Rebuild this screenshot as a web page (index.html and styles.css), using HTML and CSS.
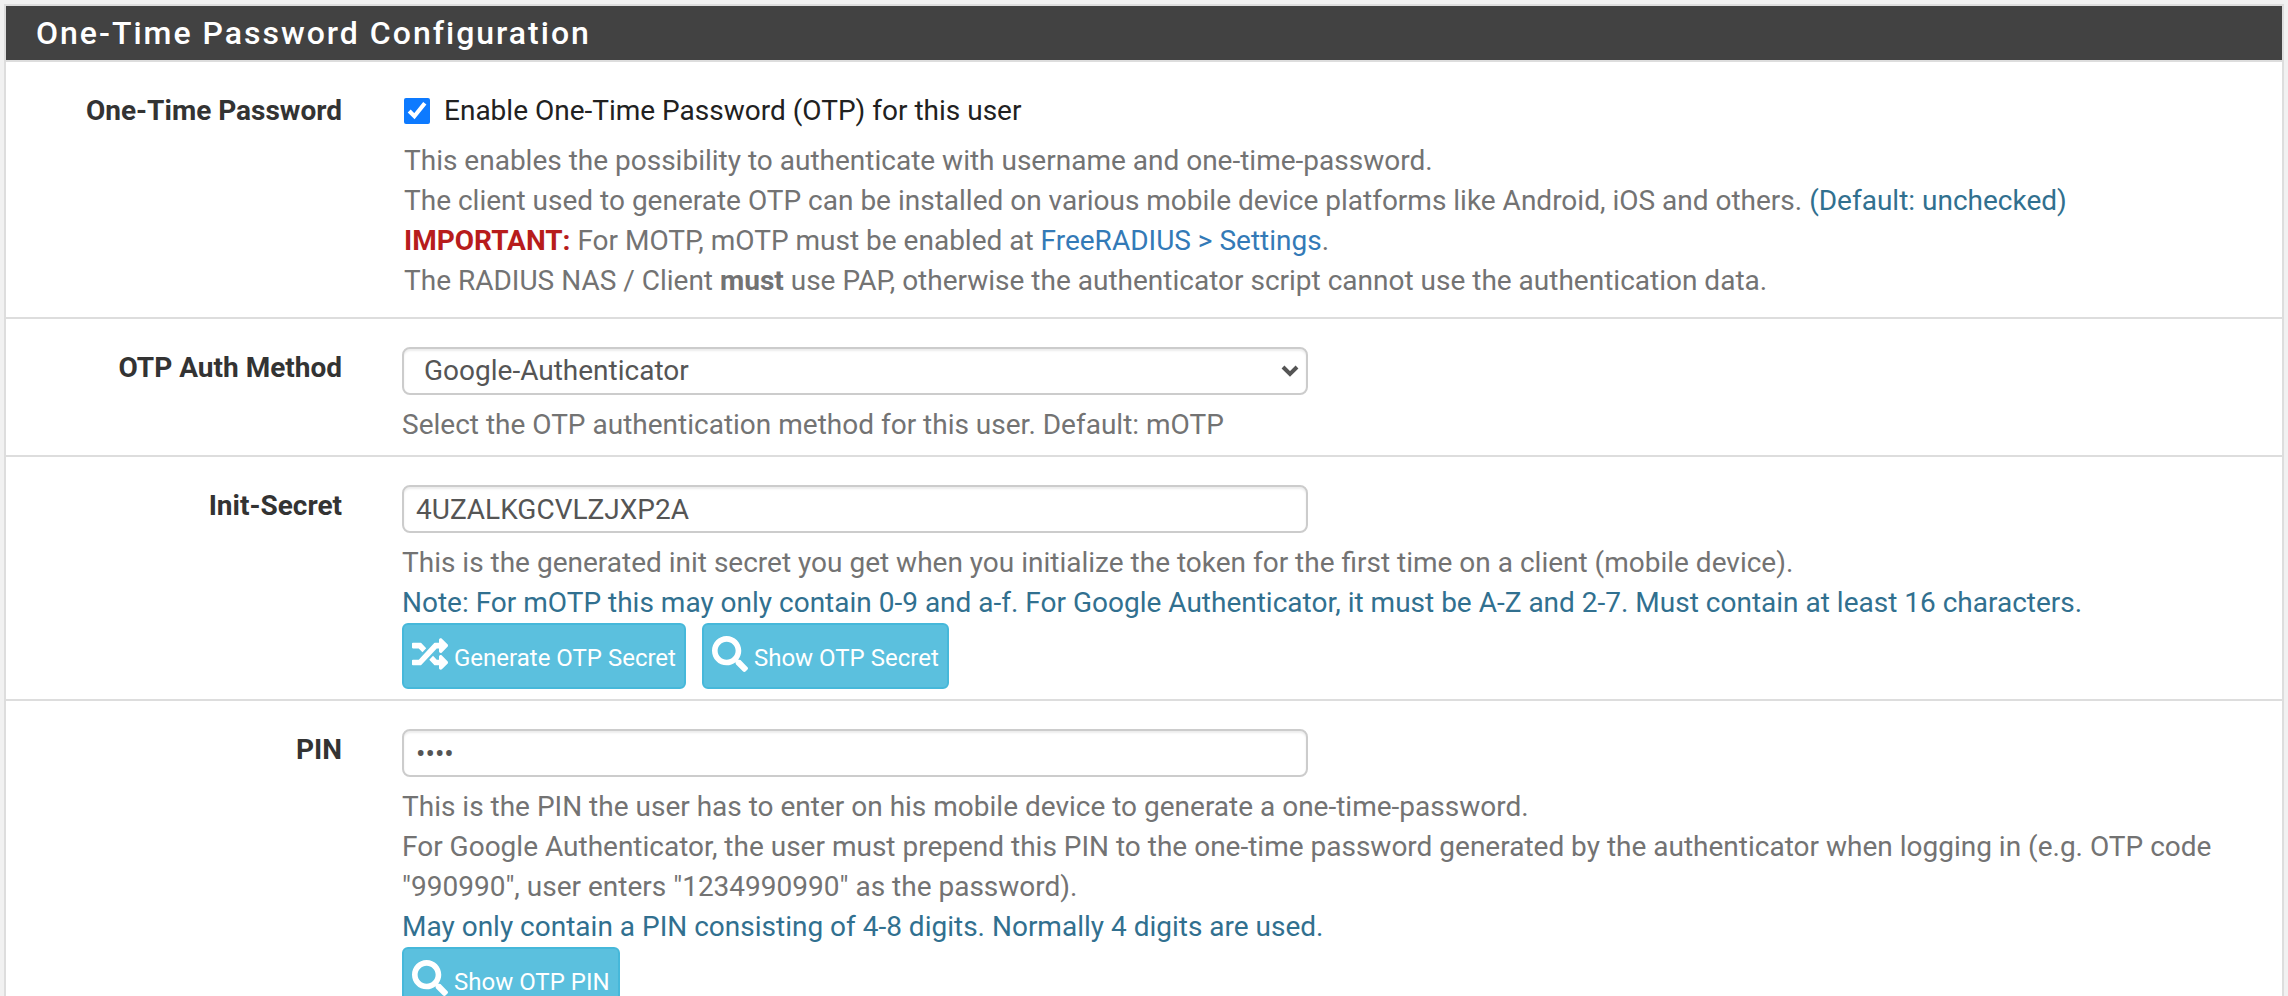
FILE: index.html
```html
<!DOCTYPE html>
<html lang="en">
<head>
<meta charset="utf-8">
<title>One-Time Password Configuration</title>
<link rel="stylesheet" href="styles.css">
</head>
<body>
<svg class="sprite" aria-hidden="true">
  <symbol id="icon-random" viewBox="0 0 512 512"><path d="M504.971 359.029c9.373 9.373 9.373 24.569 0 33.941l-80 79.984c-15.01 15.01-40.971 4.49-40.971-16.971V416h-58.785a12.004 12.004 0 0 1-8.773-3.812l-70.556-75.596 53.333-57.143L352 336h32v-39.981c0-21.438 25.943-31.998 40.971-16.971l80 79.981zM12 176h84l52.781 56.551 53.333-57.143-70.556-75.596A11.999 11.999 0 0 0 122.785 96H12c-6.627 0-12 5.373-12 12v56c0 6.627 5.373 12 12 12zm372 0v39.984c0 21.46 25.961 31.98 40.971 16.971l80-79.984c9.373-9.373 9.373-24.569 0-33.941l-80-79.981C409.943 24.021 384 34.582 384 56.019V96h-58.785a12.004 12.004 0 0 0-8.773 3.812L96 336H12c-6.627 0-12 5.373-12 12v56c0 6.627 5.373 12 12 12h110.785c3.326 0 6.503-1.381 8.773-3.812L352 176h32z"/></symbol>
  <symbol id="icon-search" viewBox="0 0 512 512"><path d="M505 442.7L405.3 343c-4.5-4.5-10.6-7-17-7H372c27.6-35.3 44-79.7 44-128C416 93.1 322.9 0 208 0S0 93.1 0 208s93.1 208 208 208c48.3 0 92.7-16.4 128-44v16.3c0 6.4 2.5 12.5 7 17l99.7 99.7c9.4 9.4 24.6 9.4 33.9 0l28.3-28.3c9.4-9.4 9.4-24.6.1-34zM208 336c-70.7 0-128-57.2-128-128 0-70.7 57.2-128 128-128 70.7 0 128 57.2 128 128 0 70.7-57.2 128-128 128z"/></symbol>
</svg>
<form class="panel">
  <h2 class="panel-title">One-Time Password Configuration</h2>

  <div class="row">
    <div class="row-label">One-Time Password</div>
    <div class="row-body row-body-check">
      <label class="check"><input type="checkbox" checked><span>Enable One-Time Password (OTP) for this user</span></label>
      <p class="help">This enables the possibility to authenticate with username and one-time-password.<br>
        The client used to generate OTP can be installed on various mobile device platforms like Android, iOS and others. <span class="info">(Default: unchecked)</span><br>
        <strong class="danger">IMPORTANT:</strong> For MOTP, mOTP must be enabled at <a href="#settings">FreeRADIUS &gt; Settings</a>.<br>
        The RADIUS NAS / Client <strong>must</strong> use PAP, otherwise the authenticator script cannot use the authentication data.</p>
    </div>
  </div>

  <div class="row">
    <label class="row-label" for="method">OTP Auth Method</label>
    <div class="row-body">
      <div class="select">
        <select class="control" id="method"><option>Google-Authenticator</option><option>mOTP</option></select>
        <svg class="chevron" viewBox="0 0 18 12" aria-hidden="true"><path d="M2 2l7 7 7-7"/></svg>
      </div>
      <p class="help">Select the OTP authentication method for this user. Default: mOTP</p>
    </div>
  </div>

  <div class="row">
    <label class="row-label" for="secret">Init-Secret</label>
    <div class="row-body">
      <input class="control" id="secret" type="text" value="4UZALKGCVLZJXP2A">
      <p class="help">This is the generated init secret you get when you initialize the token for the first time on a client (mobile device).<br>
        <span class="info">Note: For mOTP this may only contain 0-9 and a-f. For Google Authenticator, it must be A-Z and 2-7. Must contain at least 16 characters.</span></p>
      <div class="buttons">
        <button class="btn" type="button"><svg class="icon" aria-hidden="true"><use href="#icon-random"/></svg>Generate OTP Secret</button>
        <button class="btn" type="button"><svg class="icon" aria-hidden="true"><use href="#icon-search"/></svg>Show OTP Secret</button>
      </div>
    </div>
  </div>

  <div class="row">
    <label class="row-label" for="pin">PIN</label>
    <div class="row-body">
      <input class="control" id="pin" type="password" value="1234">
      <p class="help">This is the PIN the user has to enter on his mobile device to generate a one-time-password.<br>
        For Google Authenticator, the user must prepend this PIN to the one-time password generated by the authenticator when logging in (e.g. OTP code "990990", user enters "1234990990" as the password).<br>
        <span class="info">May only contain a PIN consisting of 4-8 digits. Normally 4 digits are used.</span></p>
      <div class="buttons">
        <button class="btn" type="button"><svg class="icon" aria-hidden="true"><use href="#icon-search"/></svg>Show OTP PIN</button>
      </div>
    </div>
  </div>
</form>
</body>
</html>
```
FILE: styles.css
```css
* {
  box-sizing: border-box;
}

body {
  margin: 0;
  padding: 4px;
  background: #f1f1f1;
  color: #212121;
  font-family: Roboto, "Liberation Sans", sans-serif;
  font-size: 28px;
  line-height: 40px;
}

.sprite {
  display: none;
}

.panel {
  background: #fff;
  border: 2px solid #ddd;
}

.panel-title {
  margin: 0;
  padding: 7px 30px;
  background: #424242;
  border-bottom: 2px solid #ddd;
  color: #fff;
  font-size: 32px;
  font-weight: 500;
  letter-spacing: 2px;
}

.row {
  display: flex;
  gap: 60px;
  padding: 28px 30px 10px 0;
  border-bottom: 2px solid #ddd;
}

.row:last-child {
  border-bottom: 0;
}

.row-label {
  flex: 0 0 336px;
  padding-top: 1px;
  color: #333;
  font-weight: 700;
  text-align: right;
}

.row-body {
  flex: 1;
  min-width: 0;
}

.row-body-check {
  padding: 1px 0 6px 2px;
}

.check {
  display: flex;
  align-items: center;
  gap: 14px;
}

.check input {
  width: 26px;
  height: 26px;
  margin: 0;
  accent-color: #0d7aff;
}

.help {
  margin: 10px 0 0;
  color: #737373;
}

.info {
  color: #31708f;
}

.danger {
  color: #b71c1c;
}

a {
  color: #337ab7;
  text-decoration: none;
}

.select {
  position: relative;
  width: 49%;
  max-width: 906px;
}

.control {
  display: block;
  width: 49%;
  max-width: 906px;
  height: 48px;
  padding: 0 12px;
  background: #fff;
  border: 2px solid #ccc;
  border-radius: 8px;
  box-shadow: inset 0 2px 2px rgba(0, 0, 0, 0.075);
  color: #555;
  font: inherit;
  appearance: none;
}

.select .control {
  width: 100%;
  padding: 0 20px;
}

.chevron {
  position: absolute;
  top: 18px;
  right: 9px;
  width: 18px;
  height: 12px;
  fill: none;
  stroke: #555;
  stroke-width: 4;
  pointer-events: none;
}

.buttons {
  display: flex;
  gap: 16px;
}

.btn {
  display: flex;
  align-items: flex-end;
  gap: 6px;
  padding: 11px 8px 15px;
  background: #5bc0de;
  border: 2px solid #46b8da;
  border-radius: 6px;
  color: #fff;
  font-family: inherit;
  font-size: 24px;
  line-height: 28px;
}

.icon {
  width: 36px;
  height: 36px;
  fill: currentColor;
}
```
